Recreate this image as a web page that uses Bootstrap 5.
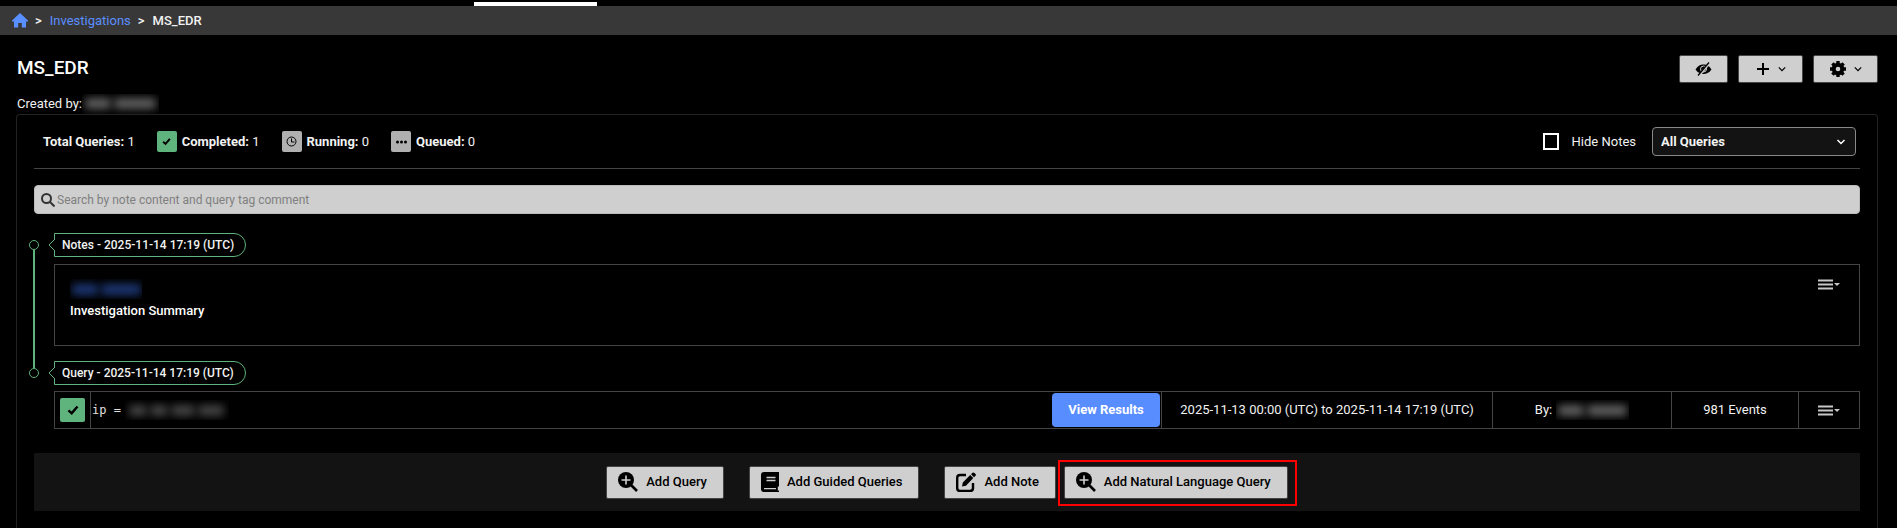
<!DOCTYPE html>
<html lang="en" data-bs-theme="dark">
<head>
<meta charset="utf-8">
<meta name="viewport" content="width=device-width, initial-scale=1">
<title>MS_EDR - Investigations</title>
<link href="https://cdn.jsdelivr.net/npm/bootstrap@5.3.0/dist/css/bootstrap.min.css" rel="stylesheet">
<style>
  :root { --ok: #5fb37c; --line: #444; --face: #cfcfcf; --link: #5a8fff; }
  body { background: #000; color: #f2f2f2; font: 400 13px/20px Roboto, "Liberation Sans", sans-serif; overflow: hidden; }
  svg { display: block; flex: none; }
  .top-strip { height: 6px; padding: 2px 0 0 25%; }
  .active-tab { width: 123px; height: 4px; background: #fff; }
  .crumbs { background: #383838; height: 29px; padding: 0 12px; }
  .crumbs a, .author-link { color: var(--link); text-decoration: none; }
  .crumbs .sep { padding: 0 8px 0 7px; font-weight: 500; }
  .page { padding: 0 19px 0 16px; }
  .page-head { padding: 20px 0 0 1px; }
  .page-title { font-size: 19px; line-height: 26px; font-weight: 500; margin: 0; color: #fff; }
  .header-tools { gap: 10px; }
  .tool-btn, .add-btn { background: var(--face); border: 1px solid #444; border-radius: 2px; color: #000; display: flex; align-items: center; justify-content: center; }
  .tool-btn { height: 28px; width: 65px; gap: 8px; padding: 0; }
  .tool-btn.narrow { width: 49px; }
  .created { margin-top: 10px; height: 21px; padding-left: 1px; }
  .panel { border: 1px solid #222; border-bottom: 0; border-radius: 4px 4px 0 0; padding: 12px 17px 17px; }
  .stats { height: 42px; padding: 0 4px 0 9px; }
  .stat { display: flex; align-items: center; gap: 5px; }
  .stat-icon { width: 20px; height: 21px; border-radius: 2px; background: #b0b0b0; color: #000; display: grid; place-items: center; }
  .stat-icon.ok, .state.ok { background: var(--ok); }
  .stat-list { gap: 22px; }
  .hide-box { appearance: none; width: 16px; height: 17px; border: 2px solid #fff; border-radius: 0; margin: 0 13px 0 0; background: #000; }
  .hide-box:checked { background: var(--ok); }
  .query-filter { width: 204px; height: 29px; padding: 0 28px 0 8px; border: 1px solid #888; border-radius: 4px; background-color: #131313; color: #f2f2f2; font-size: 13px; font-weight: 700; background-size: 10px 10px; background-position: right 9px center;
    background-image: url("data:image/svg+xml,%3Csvg xmlns='http://www.w3.org/2000/svg' viewBox='0 0 10 10'%3E%3Cpath d='M1.5 3l3.5 3.500L8.500 3' fill='none' stroke='%23fff' stroke-width='1.500'/%3E%3C/svg%3E"); }
  .rule { height: 1px; background: var(--line); margin-top: -1px; }
  .search { background: var(--face); border: 1px solid #bbb; border-radius: 4px; height: 29px; margin-top: 16px; padding: 0 6px; gap: 2px; color: #333; }
  .search input { border: 0; background: none; outline: 0; padding: 0; color: #222; font-size: 12px; }
  .search input::placeholder { color: #808080; opacity: 1; }
  .timeline { margin-top: 19px; }
  .entry { display: grid; grid-template-columns: 20px minmax(0, 1fr); }
  .rail { position: relative; }
  .rail::before { content: ""; position: absolute; left: -5px; top: 7px; width: 10px; height: 10px; border: 1px solid var(--ok); border-radius: 50%; }
  .entry:first-child .rail::after { content: ""; position: absolute; left: -1px; top: 17px; bottom: -7px; width: 2px; background: var(--ok); }
  .tag { position: relative; display: inline-block; height: 24px; line-height: 22px; padding: 0 11px 0 7px; border: 1px solid var(--ok); border-radius: 0 12px 12px 0; font-size: 12px; font-weight: 500; vertical-align: top; }
  .tag svg { position: absolute; left: -7px; top: 5px; }
  .note { border: 1px solid var(--line); height: 82px; margin: 7px 0 15px; padding: 14px 19px 0 15px; }
  .note-text { font-weight: 500; color: #fff; }
  .menu-btn { border: 0; background: none; padding: 0; color: #c8c8c8; }
  .query-row { border: 1px solid var(--line); height: 38px; margin-top: 6px; }
  .query-row > * { display: flex; align-items: center; justify-content: center; }
  .query-row > * + * { border-left: 1px solid var(--line); }
  .cell-state { width: 35px; }
  .state { width: 25px; height: 24px; border-radius: 2px; display: grid; place-items: center; color: #000; }
  .cell-text { padding: 0 1px; }
  .query-code { font-family: "DejaVu Sans Mono", "Liberation Mono", monospace; font-size: 12px; color: #e0e0e0; }
  .cell-time { width: 331px; } .cell-by { width: 179px; gap: 4px; }
  .cell-events { width: 127px; } .cell-menu { width: 61px; }
  .results-btn { background: #588dff; color: #fff; border: 0; border-radius: 4px; width: 108px; height: 34px; font-size: 13px; font-weight: 700; }
  .masked { display: inline-flex; align-items: center; justify-content: center; gap: 3px; overflow: hidden; height: 20px; color: #606060; }
  .masked i { height: 11px; background: currentColor; filter: blur(4px); border-radius: 3px; }
  .actions { background: #131313; height: 58px; margin-top: 24px; gap: 25px; }
  .pair { display: flex; gap: 8px; }
  .add-btn { height: 33px; font-size: 13px; font-weight: 500; padding: 0 16px 0 11px; gap: 8px; }
  .picked { position: relative; }
  .picked::after { content: ""; position: absolute; inset: -6px -9px -7px -6px; border: 2px solid #f00; pointer-events: none; }
</style>
</head>
<body>
<svg width="0" height="0" class="position-absolute" aria-hidden="true">
  <symbol id="check" viewBox="0 0 12 12"><path d="M1.500 6.300 4.700 9.300 10.500 2.500" fill="none" stroke="currentColor" stroke-width="2.500"/></symbol>
  <symbol id="chev" viewBox="0 0 10 10"><path d="M1 3l4 4 4-4" fill="none" stroke="currentColor" stroke-width="1.600"/></symbol>
  <symbol id="zoom-plus" viewBox="0 0 20 20"><circle cx="8" cy="8" r="8"/><path d="M12.500 12.500 19 19" stroke="#000" stroke-width="2.600"/><path d="M8 3.500v9M3.500 8h9" stroke="#cfcfcf" stroke-width="1.600"/></symbol>
  <symbol id="bars" viewBox="0 0 22 11"><path d="M0 1.500h15M0 5.500h15M0 9.500h15" stroke="currentColor" stroke-width="2"/><path d="M16 4h6l-3 3z" fill="currentColor"/></symbol>
</svg>

<div class="top-strip"><div class="active-tab"></div></div>
<nav class="crumbs d-flex align-items-center" aria-label="Breadcrumb">
  <a href="#" aria-label="Home"><svg width="16" height="15" viewBox="0 0 16 15" fill="currentColor"><path d="M8 0 16 7.500V8.500H14V14.500H9.800V10H6.200V14.500H2V8.500H0V7.500z"/></svg></a>
  <span class="sep">&gt;</span><a href="#">Investigations</a><span class="sep">&gt;</span><span class="fw-medium">MS_EDR</span>
</nav>

<main class="page">
  <header class="page-head d-flex align-items-start justify-content-between">
    <h1 class="page-title">MS_EDR</h1>
    <div class="header-tools d-flex">
      <button class="tool-btn narrow" aria-label="Hide"><svg width="17" height="14" viewBox="0 0 17 14"><path d="M.5 7.500C3 3.500 5.500 2.500 8.500 2.500S14 3.500 16.500 7.500C14 11 11.500 12 8.500 12S3 11 .5 7.500z"/><circle cx="8.500" cy="7" r="3" fill="none" stroke="#cfcfcf"/><path d="M3.600 14 14.600 1" stroke="#cfcfcf" stroke-width="2.400"/><path d="M3 13.500 14 .5" stroke="#000" stroke-width="1.300"/></svg></button>
      <button class="tool-btn" aria-label="Add"><svg width="14" height="14" viewBox="0 0 14 14"><path d="M7 1v12M1 7h12" stroke="#000" stroke-width="2"/></svg><svg width="8" height="8"><use href="#chev"/></svg></button>
      <button class="tool-btn" aria-label="Settings"><svg width="16" height="16" viewBox="-8 -8 16 16"><circle r="4.300" fill="none" stroke="#000" stroke-width="4"/><path d="M0-8V-5M0 8V5M-8 0H-5M8 0H5M-5.600-5.600-3.500-3.500M5.600 5.600 3.500 3.500M-5.600 5.600-3.500 3.500M5.600-5.600 3.500-3.500" stroke="#000" stroke-width="3.400"/></svg><svg width="8" height="8"><use href="#chev"/></svg></button>
    </div>
  </header>
  <div class="created d-flex align-items-center">Created by: <span class="masked" style="width:77px"><i style="width:26px"></i><i style="width:42px"></i></span></div>

  <section class="panel">
    <div class="stats d-flex align-items-start">
      <div class="stat-list d-flex align-items-center pt-1">
        <span><b>Total Queries:</b> 1</span>
        <span class="stat"><span class="stat-icon ok"><svg width="9" height="9"><use href="#check"/></svg></span><span><b>Completed:</b> 1</span></span>
        <span class="stat"><span class="stat-icon"><svg width="11" height="11" viewBox="0 0 11 11" fill="none" stroke="#000"><circle cx="5.500" cy="5.500" r="4.500"/><path d="M5.500 2.500V6H8.500"/></svg></span><span><b>Running:</b> 0</span></span>
        <span class="stat"><span class="stat-icon"><svg width="11" height="4" viewBox="0 0 11 4"><circle cx="1.500" cy="2" r="1.500"/><circle cx="5.500" cy="2" r="1.500"/><circle cx="9.500" cy="2" r="1.500"/></svg></span><span><b>Queued:</b> 0</span></span>
      </div>
      <div class="d-flex align-items-center ms-auto">
        <input class="hide-box" type="checkbox" id="hide-notes"><label for="hide-notes">Hide Notes</label>
        <select class="query-filter form-select ms-3" aria-label="Query filter"><option>All Queries</option></select>
      </div>
    </div>
    <div class="rule"></div>
    <div class="search d-flex align-items-center">
      <svg width="14" height="14" viewBox="0 0 14 14" fill="none" stroke="currentColor" stroke-width="2"><circle cx="5.500" cy="5.500" r="4.500"/><path d="M9 9l4.500 4.500"/></svg>
      <input class="flex-grow-1" type="search" aria-label="Search" placeholder="Search by note content and query tag comment">
    </div>

    <div class="timeline">
      <article class="entry">
        <div class="rail"></div>
        <div>
          <div class="tag"><svg width="7" height="12" viewBox="0 0 7 12"><path d="M7 0 1 6l6 6" fill="#000" stroke="#5fb37c"/></svg>Notes - 2025-11-14 17:19 (UTC)</div>
          <div class="note d-flex justify-content-between align-items-start">
            <div><a href="#" class="author-link d-block" aria-label="Author"><span class="masked" style="width:72px;color:#1c3674"><i style="width:26px"></i><i style="width:40px"></i></span></a><div class="note-text">Investigation Summary</div></div>
            <button class="menu-btn" aria-label="Note menu"><svg width="22" height="11"><use href="#bars"/></svg></button>
          </div>
        </div>
      </article>
      <article class="entry">
        <div class="rail"></div>
        <div>
          <div class="tag"><svg width="7" height="12" viewBox="0 0 7 12"><path d="M7 0 1 6l6 6" fill="#000" stroke="#5fb37c"/></svg>Query - 2025-11-14 17:19 (UTC)</div>
          <div class="query-row d-flex">
            <div class="cell-state"><span class="state ok"><svg width="12" height="12"><use href="#check"/></svg></span></div>
            <div class="cell-text flex-grow-1"><code class="query-code">ip =</code><span class="masked ms-1" style="width:104px;color:#444"><i style="width:18px"></i><i style="width:18px"></i><i style="width:24px"></i><i style="width:26px"></i></span><button class="results-btn ms-auto">View Results</button></div>
            <div class="cell-time">2025-11-13 00:00 (UTC) to 2025-11-14 17:19 (UTC)</div>
            <div class="cell-by">By: <span class="masked" style="width:73px"><i style="width:26px"></i><i style="width:40px"></i></span></div>
            <div class="cell-events">981 Events</div>
            <div class="cell-menu"><button class="menu-btn" aria-label="Query menu"><svg width="22" height="11"><use href="#bars"/></svg></button></div>
          </div>
        </div>
      </article>
    </div>

    <div class="actions d-flex align-items-center justify-content-center">
      <button class="add-btn"><svg width="20" height="20"><use href="#zoom-plus"/></svg>Add Query</button>
      <button class="add-btn"><svg width="18" height="20" viewBox="0 0 18 20"><path d="M3 0H18V14.500H16.800V18.500H18V20H3Q0 20 0 17V3Q0 0 3 0z"/><path d="M5.500 5.500h9M5.500 8.500h9M3 16.700h12" stroke="#cfcfcf" stroke-width="1.300"/></svg>Add Guided Queries</button>
      <div class="pair">
        <button class="add-btn"><svg width="20" height="20" viewBox="0 0 20 20"><path d="M10 3H4Q1.200 3 1.200 6V16Q1.200 19 4 19H14Q17 19 17 16V11" fill="none" stroke="#000" stroke-width="2.400"/><path d="M6 14.500 6.800 10.500 14.200 3 17.300 6.100 10 13.700zM15 2.200 16.600.7Q17.500 0 18.500 1L19.500 2Q20.300 3 19.500 3.800L18 5.300z"/></svg>Add Note</button>
        <div class="picked"><button class="add-btn"><svg width="20" height="20"><use href="#zoom-plus"/></svg>Add Natural Language Query</button></div>
      </div>
    </div>
  </section>
</main>
<script src="https://cdn.jsdelivr.net/npm/bootstrap@5.3.0/dist/js/bootstrap.bundle.min.js"></script>
</body>
</html>
